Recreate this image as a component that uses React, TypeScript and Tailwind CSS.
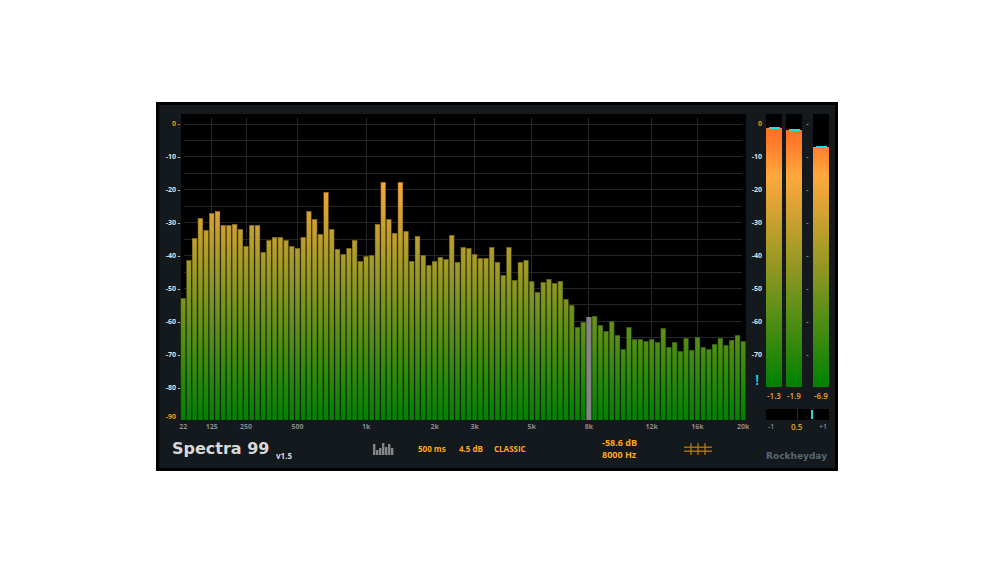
import React from "react";

const FLOOR_Y = 306;

const levels = [
  298, 260, 238, 218, 230, 213, 211, 225, 225, 224, 229, 246, 225, 225, 252, 240, 237, 237, 240, 246,
  248, 237, 211, 219, 234, 192, 229, 249, 254, 248, 240, 261, 256, 255, 224, 182, 219, 233, 182, 231,
  261, 236, 255, 265, 261, 257, 259, 235, 262, 247, 248, 254, 258, 258, 247, 262, 275, 247, 280, 262,
  260, 281, 292, 282, 279, 283, 281, 299, 305, 327, 322, 317, 316, 325, 331, 321, 335, 349, 327, 339,
  339, 341, 339, 342, 328, 347, 342, 351, 338, 350, 337, 347, 349, 344, 338, 345, 340, 335, 341,
].map((y) => y - 114);

const SELECTED = 71;
const center = (i: number) => 2.2 + (i * 560) / 98;

const ticks = [
  { i: 0, t: "22" },
  { i: 5, t: "125" },
  { i: 11, t: "250" },
  { i: 20, t: "500" },
  { i: 32, t: "1k" },
  { i: 44, t: "2k" },
  { i: 51, t: "3k" },
  { i: 61, t: "5k" },
  { i: 71, t: "8k" },
  { i: 82, t: "12k" },
  { i: 90, t: "16k" },
  { i: 98, t: "20k" },
];

function Spectrum() {
  return (
    <svg viewBox="0 0 565 320" className="block w-full overflow-visible" role="img" aria-label="Spectrum">
      <defs>
        <linearGradient id="level" gradientUnits="userSpaceOnUse" x1="0" y1="62" x2="0" y2="306">
          <stop offset="0" stopColor="#ffa83c" />
          <stop offset="1" stopColor="#008200" />
        </linearGradient>
      </defs>
      <rect width="565" height="306" fill="#000" />
      {Array.from({ length: 18 }, (_, k) => (
        <rect key={k} x="3" y={Math.round(9.5 + k * 16.45)} width="558" height="1" fill="#262626" />
      ))}
      {ticks.slice(1, -1).map(({ i }) => (
        <rect key={i} x={Math.round(center(i) - 0.5)} y="4" width="1" height="302" fill="#262626" />
      ))}
      {levels.map((y, i) => {
        const x = center(i) - 2.6;
        const selected = i === SELECTED;
        const fill = selected ? "#858585" : "url(#level)";
        return (
          <g key={i}>
            <rect x={x} y={y} width="5.2" height={FLOOR_Y - y} fill="#000" />
            <rect x={x} y={y} width="5.2" height={FLOOR_Y - y} fill={fill} opacity={selected ? 1 : 0.65} />
            <rect x={x + 0.6} y={y + 1} width="4" height={FLOOR_Y - y - 1} fill={fill} />
          </g>
        );
      })}
      {ticks.map(({ i, t }) => (
        <text key={t} x={center(i)} y="315" textAnchor="middle" className="fill-[#8a8a8a] text-[7px] font-bold">
          {t}
        </text>
      ))}
    </svg>
  );
}

const scaleStyle = "text-right text-[7px] font-bold text-[#e0e0e0]";

function Scale() {
  return (
    <div className={`w-[22px] shrink-0 pr-px leading-4 whitespace-nowrap ${scaleStyle}`}>
      <div className="h-[33px] pt-[2px] text-[#ff9010]">0 -</div>
      {[10, 20, 30, 40, 50, 60, 70].map((n) => (
        <div key={n} className="h-[33px] pt-[2px]">
          -{n} -
        </div>
      ))}
      <div className="h-[31px] pt-[2px]">-80 -</div>
      <div className="pr-1 text-[#ff9010]">-90</div>
    </div>
  );
}

function Meter({ top, label, value }: { top: number; label: string; value: string }) {
  const id = `meter-${label}`;
  return (
    <div className="flex w-4 flex-col items-center">
      <svg viewBox="0 0 16 273" className="block w-4 bg-black" role="img" aria-label={label}>
        <defs>
          <linearGradient id={id} gradientUnits="userSpaceOnUse" x1="0" y1="10" x2="0" y2="273">
            <stop offset="0" stopColor="#ff7028" />
            <stop offset="0.06" stopColor="#ff7829" />
            <stop offset="0.2" stopColor="#ffa83c" />
            <stop offset="1" stopColor="#008200" />
          </linearGradient>
        </defs>
        <rect y={top} width="16" height={273 - top} fill={`url(#${id})`} />
        <rect x="3" y={top - 1} width="11" height="2" fill="#20e0e0" />
      </svg>
      <span className="pt-[2px] text-[8px] leading-[14px] font-semibold whitespace-nowrap text-[#f0a020]">{value}</span>
    </div>
  );
}

function MeterPanel() {
  return (
    <section className="w-[89px] shrink-0 pr-[6px]">
      <div className="flex">
        <div className={`mr-1 w-4 leading-4 ${scaleStyle}`}>
          <div className="h-[33px] pt-[2px] text-[#ff9010]">0</div>
          {[10, 20, 30, 40, 50, 60, 70].map((n) => (
            <div key={n} className="h-[33px] pt-[2px] whitespace-nowrap">
              -{n}
            </div>
          ))}
          <div className="pr-[3px] text-[14px] leading-1 font-semibold text-[#20e0e8]">!</div>
        </div>
        <Meter top={14} label="left" value="-1.3" />
        <div className="w-1" />
        <Meter top={16} label="right" value="-1.9" />
        <div className="w-[11px] text-center text-[7px] leading-4 font-semibold text-[#b0b0b0]">
          {[0, 1, 2, 3, 4, 5, 6, 7].map((n) => (
            <div key={n} className="h-[33px] pt-[2px]">
              -
            </div>
          ))}
        </div>
        <Meter top={33} label="sum" value="-6.9" />
      </div>
      <div className="mt-[6px] ml-5">
        <svg viewBox="0 0 63 11" className="block w-full bg-black" role="img" aria-label="Balance">
          <rect x="31" width="1" height="11" fill="#262b2e" />
          <rect x="45" y="1" width="2" height="9" fill="#20d8e0" />
        </svg>
        <div className="flex justify-between px-[2px] text-[7px] leading-[14px] font-semibold text-[#8a8a8a]">
          <span>-1</span>
          <span className="text-[8px] text-[#f0a020]">0.5</span>
          <span>+1</span>
        </div>
      </div>
      <div className="mt-[14px] text-right font-['DejaVu_Sans',sans-serif] text-[9px] leading-4 font-bold text-[#566873]">
        <span className="mr-[2px]">Rockheyday</span>
      </div>
    </section>
  );
}

function BarsIcon() {
  const bars = [11, 5, 7, 12, 8, 11, 7];
  return (
    <svg viewBox="0 0 21 13" className="block h-[13px] w-[21px]" aria-hidden="true">
      {bars.map((h, i) => (
        <rect key={i} x={i * 3} y={12 - h} width="2.4" height={h} fill="#858585" />
      ))}
    </svg>
  );
}

function GridIcon() {
  return (
    <svg viewBox="0 0 28 12" className="block h-3 w-7" aria-hidden="true">
      <path d="M0 4.2H28M0 8.2H28" stroke="#a86a08" strokeWidth="1.6" />
      <path d="M7 0V12M14 0V12M21 0V12" stroke="#c27c0a" strokeWidth="1.2" />
    </svg>
  );
}

const setting = "text-left text-[8px] font-bold whitespace-nowrap text-[#ffa812]";

export default function App() {
  return (
    <div className="flex min-h-screen items-center justify-center bg-white pt-2 pr-[11px] font-['Open_Sans',sans-serif]">
      <main className="flex w-full max-w-[682px] border-3 border-black bg-[#13191c] pt-[9px]">
        <div className="min-w-0 flex-1">
          <div className="flex">
            <Scale />
            <div className="min-w-0 flex-1">
              <Spectrum />
            </div>
          </div>
          <footer className="mb-1 grid h-[30px] grid-cols-[104px_97px_45px_41px_35px_108px_82px_1fr] items-center pl-[13px]">
            <h1 className="font-['DejaVu_Sans',sans-serif] text-[16px] leading-6 font-bold whitespace-nowrap text-[#d8d8d8]">
              Spectra 99
            </h1>
            <span className="pt-[14px] text-[8px] leading-4 font-bold text-[#d8d8d8]">v1.5</span>
            <button type="button" aria-label="Display mode">
              <BarsIcon />
            </button>
            <button type="button" className={setting}>
              500 ms
            </button>
            <button type="button" className={setting}>
              4.5 dB
            </button>
            <button type="button" className={setting}>
              CLASSIC
            </button>
            <output className="text-[9px] leading-3 font-bold text-[#ffa812]">
              <span className="block">-58.6 dB</span>
              <span className="block">8000 Hz</span>
            </output>
            <button type="button" aria-label="Toggle grid">
              <GridIcon />
            </button>
          </footer>
        </div>
        <MeterPanel />
      </main>
    </div>
  );
}
